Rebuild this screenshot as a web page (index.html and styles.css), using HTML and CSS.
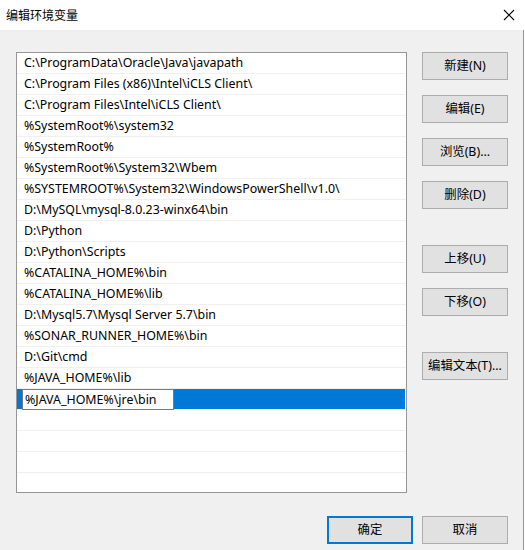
FILE: index.html
```html
<!DOCTYPE html>
<html lang="zh-CN">
<head>
<meta charset="utf-8">
<title>编辑环境变量</title>
<link rel="stylesheet" href="styles.css">
</head>
<body>
<div class="dialog">
  <div class="titlebar">
    <span class="title">编辑环境变量</span>
    <svg class="close" width="12" height="12" viewBox="0 0 12 12"><path d="M1 1 L11 11 M11 1 L1 11" stroke="#000" stroke-width="1.1" fill="none"/></svg>
  </div>
  <div class="body">
    <div class="content">
      <div class="list">
        <div class="row">C:\ProgramData\Oracle\Java\javapath</div>
        <div class="row">C:\Program Files (x86)\Intel\iCLS Client\</div>
        <div class="row">C:\Program Files\Intel\iCLS Client\</div>
        <div class="row">%SystemRoot%\system32</div>
        <div class="row">%SystemRoot%</div>
        <div class="row">%SystemRoot%\System32\Wbem</div>
        <div class="row">%SYSTEMROOT%\System32\WindowsPowerShell\v1.0\</div>
        <div class="row">D:\MySQL\mysql-8.0.23-winx64\bin</div>
        <div class="row">D:\Python</div>
        <div class="row">D:\Python\Scripts</div>
        <div class="row">%CATALINA_HOME%\bin</div>
        <div class="row">%CATALINA_HOME%\lib</div>
        <div class="row">D:\Mysql5.7\Mysql Server 5.7\bin</div>
        <div class="row">%SONAR_RUNNER_HOME%\bin</div>
        <div class="row">D:\Git\cmd</div>
        <div class="row">%JAVA_HOME%\lib</div>
        <div class="row selected"><span class="editor">%JAVA_HOME%\jre\bin</span></div>
        <div class="row"></div>
        <div class="row"></div>
        <div class="row"></div>
        <div class="row"></div>
      </div>
      <div class="side">
        <button class="btn">新建(N)</button>
        <button class="btn gap-s">编辑(E)</button>
        <button class="btn gap-s">浏览(B)...</button>
        <button class="btn gap-s">删除(D)</button>
        <button class="btn gap-l">上移(U)</button>
        <button class="btn gap-s">下移(O)</button>
        <button class="btn gap-l">编辑文本(T)...</button>
      </div>
    </div>
    <div class="footer">
      <button class="btn default">确定</button>
      <button class="btn">取消</button>
    </div>
  </div>
</div>
</body>
</html>
```

FILE: styles.css
```css
html, body {
  margin: 0;
  padding: 0;
  background: #ffffff;
}
body {
  font-family: "Noto Sans", "Noto Sans CJK SC", sans-serif;
  font-size: 12.4px;
  color: #000;
}
.dialog {
  width: 525px;
  height: 550px;
  display: flex;
  flex-direction: column;
}
.titlebar {
  height: 30px;
  background: #fff;
  display: flex;
  align-items: center;
  justify-content: space-between;
  padding: 0 10px 0 6px;
  box-sizing: border-box;
  flex: none;
}
.title {
  font-family: "Noto Sans CJK SC", sans-serif;
  font-size: 12px;
  line-height: 1;
  margin-top: -1px;
}
.close {
  display: block;
  margin-top: -1px;
}
.body {
  flex: 1;
  width: 523px;
  background: #f0f0f0;
  border-right: 1px solid #6d9ccf;
  display: flex;
  flex-direction: column;
}
.content {
  display: flex;
  padding: 22px 0 0 16px;
  gap: 15px;
}
.list {
  width: 391px;
  height: 441px;
  box-sizing: border-box;
  border: 1px solid #969696;
  background: #fff;
  overflow: hidden;
}
.row {
  height: 20px;
  border-bottom: 1px solid #f0f0f0;
  padding-left: 7px;
  line-height: 20px;
  white-space: nowrap;
}
.row.selected {
  background: #0078d7;
  padding-left: 5px;
  margin-right: 1px;
}
.editor {
  display: inline-block;
  width: 152px;
  height: 21px;
  box-sizing: border-box;
  border: 1px solid #7a7a7a;
  background: #fff;
  line-height: 19px;
  padding-left: 2px;
  vertical-align: top;
}
.side {
  display: flex;
  flex-direction: column;
  width: 86px;
}
.btn {
  width: 86px;
  height: 28px;
  box-sizing: border-box;
  background: #e1e1e1;
  border: 1px solid #adadad;
  font-family: "Noto Sans", "Noto Sans CJK SC", sans-serif;
  font-size: 12.4px;
  color: #000;
  padding: 0;
  margin: 0;
  line-height: 24px;
}
.gap-s { margin-top: 15px; }
.gap-l { margin-top: 36px; }
.footer {
  display: flex;
  justify-content: flex-end;
  gap: 9px;
  padding: 23px 15px 0 0;
}
.btn.default {
  border: 2px solid #0078d7;
}
```
